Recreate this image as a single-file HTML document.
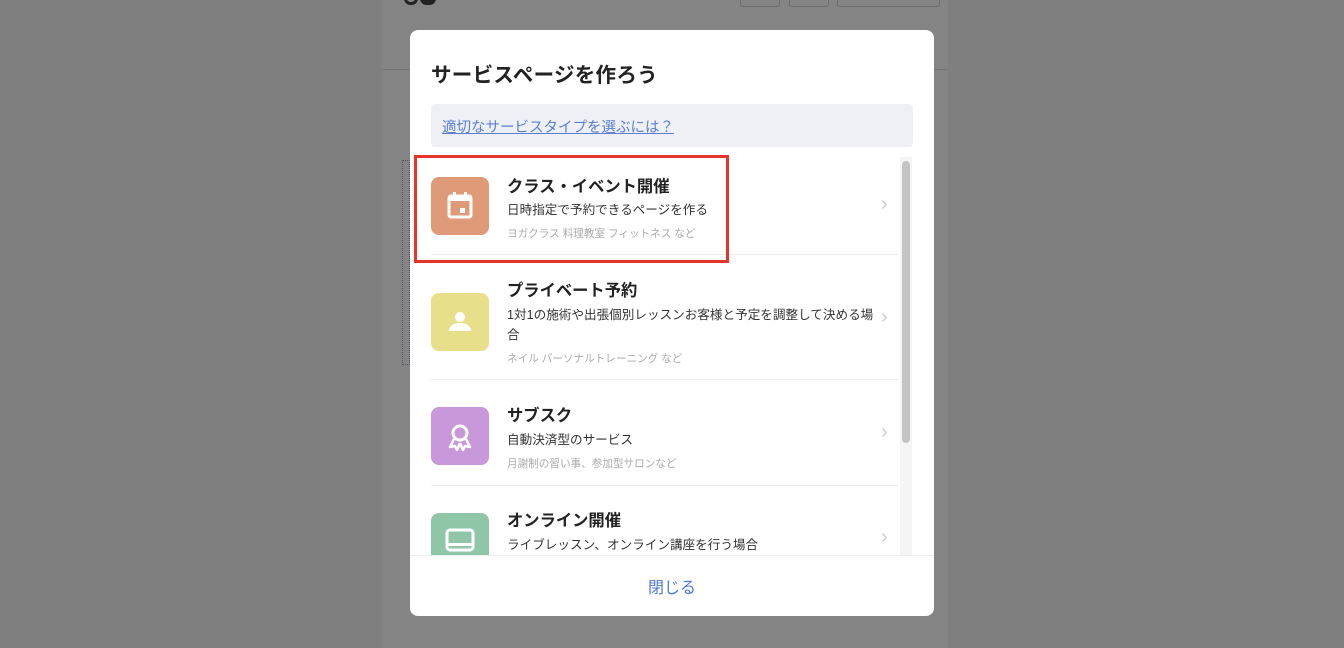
<!DOCTYPE html>
<html><head><meta charset="utf-8"><style>
*{box-sizing:border-box;margin:0;padding:0}
body{width:1344px;height:648px;background:#7f7f7f;font-family:"Liberation Sans","Noto Sans CJK JP",sans-serif;position:relative;overflow:hidden;color:#222}
.page{position:absolute;left:382px;top:0;width:566px;height:648px;background:#848484}
.topbar{position:absolute;left:382px;top:0;width:566px;height:70px;border-bottom:1px solid #777}
.tb{position:absolute;top:-6px;height:13px;border:1px solid #6e6e6e;border-radius:3px}
.modal{position:absolute;left:410px;top:30px;width:524px;height:586px;background:#fff;border-radius:8px;overflow:hidden}
h1{position:absolute;left:21px;top:28px;font-size:20.5px;font-weight:bold;color:#222;letter-spacing:.3px}
.info{position:absolute;left:21px;top:74px;width:482px;height:43px;background:#eef0f6;border-radius:4px;padding:12px 11px;font-size:14.5px;color:#5b80cf;text-decoration:underline}
.list{position:absolute;left:0;top:127px;width:524px;height:398px;overflow:hidden}
.item{position:absolute;left:21px;width:467px;border-bottom:1px solid #ececec}
.ic{position:absolute;left:0;width:58px;height:58px;border-radius:8px}
.t{position:absolute;left:76px;font-size:16.3px;font-weight:bold;color:#222}
.d{position:absolute;left:76px;font-size:12.6px;color:#333;line-height:20px;width:368px}
.g{position:absolute;left:76px;font-size:10.6px;color:#aaa}
.ch{position:absolute;left:450px;font-size:20px;color:#ccc}
.sb{position:absolute;left:490px;top:0;width:12px;height:398px;background:#f5f5f5}
.sb div{position:absolute;left:2px;top:4px;width:8px;height:282px;background:#c4c4c4;border-radius:4px}
.foot{position:absolute;left:0;top:525px;width:524px;height:61px;border-top:1px solid #eee;text-align:center;font-size:16px;color:#4a78d4;padding-top:18px}
.red{position:absolute;left:414px;top:155px;width:315px;height:108px;border:3px solid #e5352b}
</style></head><body>
<div class="page"></div><div class="topbar"></div>
<div style="position:absolute;left:404px;top:-8px;width:14px;height:13px;border-radius:7px;border:3px solid #222"></div>
<div style="position:absolute;left:420px;top:-8px;width:16px;height:13px;border-radius:7px;background:#222"></div>
<div class="tb" style="left:740px;width:40px"></div><div class="tb" style="left:789px;width:40px"></div><div class="tb" style="left:837px;width:103px"></div>
<div style="position:absolute;left:402px;top:160px;width:8px;height:205px;border:1px dotted #556"></div>
<div class="modal">
<h1>サービスページを作ろう</h1>
<div class="info">適切なサービスタイプを選ぶには？</div>
<div class="list">
 <div class="item" style="top:0;height:98px">
  <div class="ic" style="top:20px;background:#df9a77"><svg width="58" height="58" viewBox="0 0 58 58"><rect x="18" y="19" width="22" height="21" rx="2" fill="none" stroke="#fff" stroke-width="3"/><rect x="18" y="19" width="22" height="5" fill="#fff"/><rect x="22" y="15" width="3" height="6" fill="#fff"/><rect x="33" y="15" width="3" height="6" fill="#fff"/><rect x="29" y="31" width="5" height="5" fill="#fff"/></svg></div>
  <div class="t" style="top:16px">クラス・イベント開催</div>
  <div class="d" style="top:43px">日時指定で予約できるページを作る</div>
  <div class="g" style="top:69px">ヨガクラス 料理教室 フィットネス など</div>
  <div class="ch" style="top:36px">›</div>
 </div>
 <div class="item" style="top:98px;height:125px">
  <div class="ic" style="top:38px;background:#e8df8a"><svg width="58" height="58" viewBox="0 0 58 58"><circle cx="29" cy="24" r="5" fill="#fff"/><path d="M18 38c0-6 6-8 11-8s11 2 11 8z" fill="#fff"/></svg></div>
  <div class="t" style="top:22px">プライベート予約</div>
  <div class="d" style="top:50px">1対1の施術や出張個別レッスンお客様と予定を調整して決める場合</div>
  <div class="g" style="top:96px">ネイル パーソナルトレーニング など</div>
  <div class="ch" style="top:51px">›</div>
 </div>
 <div class="item" style="top:223px;height:106px">
  <div class="ic" style="top:27px;background:#c898da"><svg width="58" height="58" viewBox="0 0 58 58"><circle cx="29" cy="26" r="7" fill="none" stroke="#fff" stroke-width="3"/><path d="M23 32l-4 8 5-1 2 4 3-7M35 32l4 8-5-1-2 4-3-7" fill="none" stroke="#fff" stroke-width="2.5" stroke-linejoin="round"/></svg></div>
  <div class="t" style="top:22px">サブスク</div>
  <div class="d" style="top:50px">自動決済型のサービス</div>
  <div class="g" style="top:76px">月謝制の習い事、参加型サロンなど</div>
  <div class="ch" style="top:41px">›</div>
 </div>
 <div class="item" style="top:329px;height:120px;border:none">
  <div class="ic" style="top:27px;background:#8fc6a8"><svg width="58" height="58" viewBox="0 0 58 58"><rect x="16" y="17" width="26" height="20" rx="3" fill="none" stroke="#fff" stroke-width="3"/><rect x="16" y="30" width="26" height="3" fill="#fff"/></svg></div>
  <div class="t" style="top:21px">オンライン開催</div>
  <div class="d" style="top:49px">ライブレッスン、オンライン講座を行う場合</div>
  <div class="ch" style="top:40px">›</div>
 </div>
 <div class="sb"><div></div></div>
</div>
<div class="foot">閉じる</div>
</div>
<div class="red"></div>
</body></html>
